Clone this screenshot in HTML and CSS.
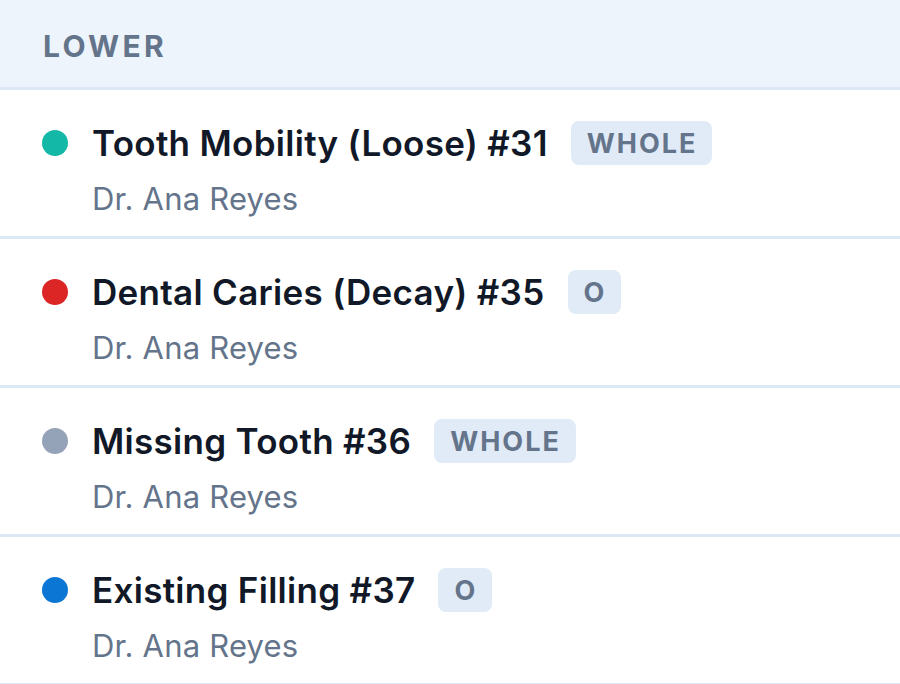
FILE: index.html
```html
<!DOCTYPE html>
<html lang="en">
<head>
    <meta charset="UTF-8">
    <title>Lower findings</title>
    <link rel="stylesheet" href="styles.css">
</head>
<body>
    <div class="section-head">LOWER</div>
    <ul class="finding-list">
        <li class="finding">
            <span class="dot dot-teal"></span>
            <div class="finding-body">
                <div class="finding-title">
                    <span class="name">Tooth Mobility (Loose) #31</span>
                    <span class="tag">WHOLE</span>
                </div>
                <div class="doctor">Dr. Ana Reyes</div>
            </div>
        </li>
        <li class="finding">
            <span class="dot dot-red"></span>
            <div class="finding-body">
                <div class="finding-title">
                    <span class="name">Dental Caries (Decay) #35</span>
                    <span class="tag">O</span>
                </div>
                <div class="doctor">Dr. Ana Reyes</div>
            </div>
        </li>
        <li class="finding">
            <span class="dot dot-gray"></span>
            <div class="finding-body">
                <div class="finding-title">
                    <span class="name">Missing Tooth #36</span>
                    <span class="tag">WHOLE</span>
                </div>
                <div class="doctor">Dr. Ana Reyes</div>
            </div>
        </li>
        <li class="finding">
            <span class="dot dot-blue"></span>
            <div class="finding-body">
                <div class="finding-title">
                    <span class="name">Existing Filling #37</span>
                    <span class="tag">O</span>
                </div>
                <div class="doctor">Dr. Ana Reyes</div>
            </div>
        </li>
    </ul>
</body>
</html>
```

FILE: styles.css
```css
:root {
    --text-dark: #111827;
    --text-muted: #64748b;
    --line: #dce8f6;
    --head-bg: #eef4fc;
    --tag-bg: #e0ebf7;
}

body {
    margin: 0;
    background: #ffffff;
    font-family: Inter, "Noto Sans", sans-serif;
}

.section-head {
    height: 90px;
    box-sizing: border-box;
    padding: 4px 0 0 43px;
    display: flex;
    align-items: center;
    background: var(--head-bg);
    border-bottom: 3px solid var(--line);
    color: var(--text-muted);
    font-size: 30px;
    font-weight: 700;
    letter-spacing: 3.3px;
}

.finding-list {
    list-style: none;
    margin: 0;
    padding: 0;
}

.finding {
    display: flex;
    align-items: flex-start;
    gap: 24px;
    padding: 31px 0 0 42px;
    height: 149px;
    box-sizing: border-box;
    border-bottom: 3px solid var(--line);
}

.dot {
    flex: none;
    width: 26px;
    height: 26px;
    margin-top: 9px;
    border-radius: 50%;
}

.dot-teal { background: #14b8a6; }
.dot-red { background: #dc2626; }
.dot-gray { background: #94a3b8; }
.dot-blue { background: #0b76d4; }

.finding-title {
    display: flex;
    align-items: center;
    gap: 23px;
    height: 44px;
}

.name {
    color: var(--text-dark);
    font-size: 35px;
    font-weight: 600;
    letter-spacing: 0.3px;
}

.tag {
    height: 44px;
    padding: 0 15px 0 16px;
    display: flex;
    align-items: center;
    background: var(--tag-bg);
    border-radius: 8px;
    color: var(--text-muted);
    font-size: 27px;
    font-weight: 700;
    letter-spacing: 2px;
}

.doctor {
    margin-top: 14px;
    color: var(--text-muted);
    font-size: 31px;
    line-height: 40px;
    letter-spacing: 0.2px;
}
```
